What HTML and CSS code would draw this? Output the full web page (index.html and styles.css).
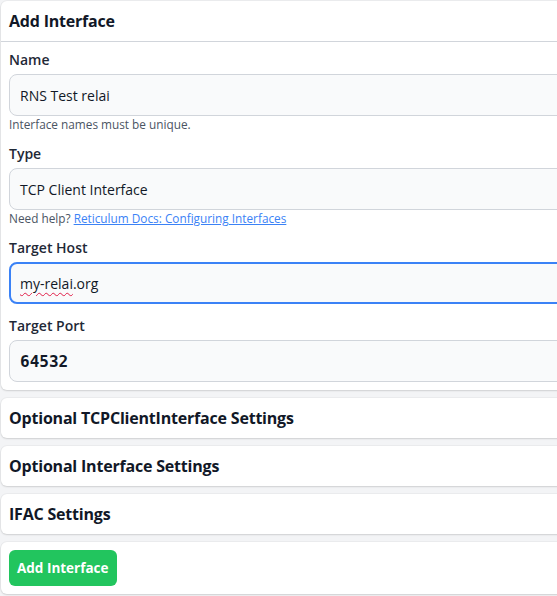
FILE: index.html
```html
<!DOCTYPE html>
<html lang="en">
<head>
  <meta charset="UTF-8" />
  <meta name="viewport" content="width=device-width, initial-scale=1.0"/>
  <title>Add Interface</title>
  <link rel="stylesheet" href="styles.css">
</head>
<body>

  <div class="page">
    <div class="card">
      <div class="card-header">Add Interface</div>
      <div class="card-body">
        <div class="field">
          <label class="label">Name</label>
          <input class="input" type="text" value="RNS Test relai" />
          <div class="hint">Interface names must be unique.</div>
        </div>
        <div class="field">
          <label class="label">Type</label>
          <div class="input select">TCP Client Interface</div>
          <div class="hint">Need help? <a href="#">Reticulum Docs: Configuring Interfaces</a></div>
        </div>
        <div class="field">
          <label class="label">Target Host</label>
          <div class="input focused"><span class="typo">my-relai</span>.org</div>
        </div>
        <div class="field">
          <label class="label">Target Port</label>
          <div class="input number">64532</div>
        </div>
      </div>
    </div>

    <div class="card">
      <div class="card-header">Optional TCPClientInterface Settings</div>
    </div>
    <div class="card">
      <div class="card-header">Optional Interface Settings</div>
    </div>
    <div class="card">
      <div class="card-header">IFAC Settings</div>
    </div>

    <div class="card">
      <div class="card-body">
        <button class="btn-add">Add Interface</button>
      </div>
    </div>
  </div>

</body>
</html>
```

FILE: styles.css
```css
html, body {
  margin: 0;
  padding: 0;
  height: 100%;
  overflow: hidden;
  background: #f3f4f6;
  font-family: "Open Sans", "Noto Sans", sans-serif;
  color: #111827;
}

.page {
  width: 640px;
  padding: 1px 0 0 1px;
  display: flex;
  flex-direction: column;
  gap: 8px;
}

.card {
  background: #fff;
  border-radius: 6px;
  box-shadow: 0 1px 2px rgba(0, 0, 0, 0.12), 0 0 0 1px rgba(0, 0, 0, 0.03);
}

.card-header {
  height: 40px;
  padding: 0 8px;
  display: flex;
  align-items: center;
  font-size: 16px;
  font-weight: 700;
  letter-spacing: -0.2px;
}

.card-header + .card-body {
  border-top: 1px solid #d1d5db;
}

.card-body {
  padding: 8px;
  display: flex;
  flex-direction: column;
  gap: 12px;
}

.field {
  display: flex;
  flex-direction: column;
}

.label {
  font-size: 14px;
  font-weight: 600;
  line-height: 20px;
  margin-bottom: 4px;
  color: #1f2937;
}

.input {
  box-sizing: border-box;
  height: 42px;
  width: 100%;
  padding: 0 10px;
  display: flex;
  align-items: center;
  border: 1px solid #d1d5db;
  border-radius: 8px;
  background: #f9fafb;
  font-family: inherit;
  font-size: 14px;
  color: #111827;
  outline: none;
}

.input.focused {
  border: 2px solid #3b82f6;
  padding: 0 9px;
}

.typo {
  text-decoration: underline wavy #e11d48;
  text-decoration-thickness: 1px;
  text-underline-offset: 3px;
}

.input.number {
  font-family: "DejaVu Sans Mono", monospace;
  font-weight: 700;
  font-size: 16px;
}

.hint {
  font-size: 11.8px;
  line-height: 16px;
  color: #4b5563;
}

.hint a {
  color: #3b82f6;
  text-decoration: underline;
}

.btn-add {
  align-self: flex-start;
  height: 36px;
  padding: 0 8px;
  border: none;
  border-radius: 6px;
  background: #22c55e;
  color: #fff;
  font-family: inherit;
  font-size: 13.5px;
  font-weight: 700;
  cursor: pointer;
}
```
